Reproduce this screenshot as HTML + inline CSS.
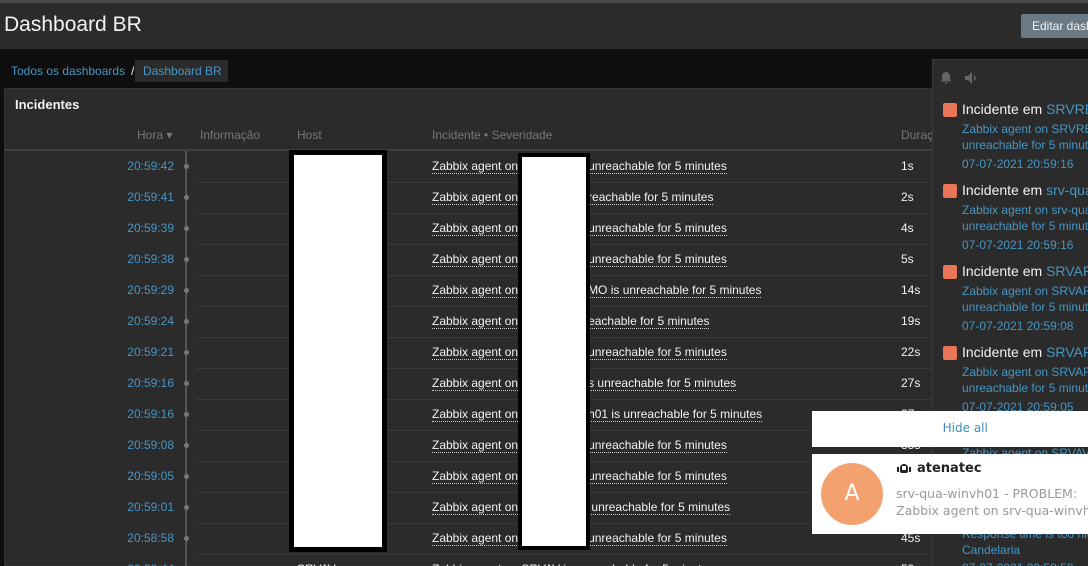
<!DOCTYPE html>
<html><head><meta charset="utf-8"><style>
*{margin:0;padding:0;box-sizing:border-box}
html,body{width:1088px;height:566px;overflow:hidden}
body{background:#0e0e0e;font-family:"Liberation Sans",Arial,sans-serif;position:relative;font-size:12px}
.a,.t,.inc,.d,.nt,.nl{position:absolute;white-space:nowrap}
.row{position:absolute;left:196px;width:740px;height:1px;background:#3a3a3a}
.t{left:100px;width:74px;text-align:right;color:#4796c4;font-size:12px}
.dot{position:absolute;left:184px;width:5px;height:5px;border-radius:50%;background:#777}
.inc{left:432px;color:#f2f2f2;border-bottom:1px dotted #ccc;line-height:14px}
.inc i{display:inline-block;width:70px}
.d{left:901px;color:#f2f2f2}
.sq{position:absolute;left:943px;width:14px;height:14px;background:#e97659;border-radius:2px}
.nt{left:962px;color:#f2f2f2;font-size:14px}
.nt span{color:#4796c4}
.nl{left:962px;color:#4796c4;font-size:12px}
</style></head><body>
<div class="a" style="left:0;top:0;width:1088px;height:3px;background:#4a4a4a"></div>
<div class="a" style="left:0;top:3px;width:1088px;height:46px;background:#2b2b2b"></div>
<div class="a" style="left:4px;top:13px;font-size:21px;color:#f2f2f2">Dashboard BR</div>
<div class="a" style="left:1021px;top:14px;width:80px;height:24px;background:#697a86;border-radius:2px;color:#f2f2f2;font-size:12px;padding:5px 0 0 11px">Editar dashboard</div>
<div class="a" style="left:11px;top:64px;color:#4796c4">Todos os dashboards</div>
<div class="a" style="left:131px;top:64px;color:#eee">/</div>
<div class="a" style="left:135px;top:60px;width:93px;height:22px;background:#2b2b2b;color:#4796c4;padding:4px 0 0 8px">Dashboard BR</div>
<div class="a" style="left:4px;top:88px;width:940px;height:478px;background:#2b2b2b;border:1px solid #333"></div>
<div class="a" style="left:15px;top:97px;color:#f2f2f2;font-size:13px;font-weight:bold">Incidentes</div>
<div class="a" style="left:137px;top:128px;color:#777">Hora ▾</div>
<div class="a" style="left:200px;top:128px;color:#777">Informação</div>
<div class="a" style="left:297px;top:128px;color:#777">Host</div>
<div class="a" style="left:432px;top:128px;color:#777">Incidente • Severidade</div>
<div class="a" style="left:901px;top:128px;color:#777">Duração</div>
<div class="a" style="left:5px;top:149px;width:930px;height:2px;background:#3f3f3f"></div>
<div class="a" style="left:185px;top:151px;width:2px;height:415px;background:#555"></div>

<div class="t" style="top:159px">20:59:42</div><div class="dot" style="top:164px"></div><div class="inc" style="top:159px">Zabbix agent on<i></i>unreachable for 5 minutes</div><div class="d" style="top:159px">1s</div><div class="row" style="top:182px"></div>
<div class="t" style="top:190px">20:59:41</div><div class="dot" style="top:195px"></div><div class="inc" style="top:190px">Zabbix agent on<i></i>reachable for 5 minutes</div><div class="d" style="top:190px">2s</div><div class="row" style="top:213px"></div>
<div class="t" style="top:221px">20:59:39</div><div class="dot" style="top:226px"></div><div class="inc" style="top:221px">Zabbix agent on<i></i>unreachable for 5 minutes</div><div class="d" style="top:221px">4s</div><div class="row" style="top:244px"></div>
<div class="t" style="top:252px">20:59:38</div><div class="dot" style="top:257px"></div><div class="inc" style="top:252px">Zabbix agent on<i></i>unreachable for 5 minutes</div><div class="d" style="top:252px">5s</div><div class="row" style="top:275px"></div>
<div class="t" style="top:283px">20:59:29</div><div class="dot" style="top:288px"></div><div class="inc" style="top:283px">Zabbix agent on<i></i>MO is unreachable for 5 minutes</div><div class="d" style="top:283px">14s</div><div class="row" style="top:306px"></div>
<div class="t" style="top:314px">20:59:24</div><div class="dot" style="top:319px"></div><div class="inc" style="top:314px">Zabbix agent on<i></i>eachable for 5 minutes</div><div class="d" style="top:314px">19s</div><div class="row" style="top:337px"></div>
<div class="t" style="top:345px">20:59:21</div><div class="dot" style="top:350px"></div><div class="inc" style="top:345px">Zabbix agent on<i></i>unreachable for 5 minutes</div><div class="d" style="top:345px">22s</div><div class="row" style="top:368px"></div>
<div class="t" style="top:376px">20:59:16</div><div class="dot" style="top:381px"></div><div class="inc" style="top:376px">Zabbix agent on<i></i>s unreachable for 5 minutes</div><div class="d" style="top:376px">27s</div><div class="row" style="top:399px"></div>
<div class="t" style="top:407px">20:59:16</div><div class="dot" style="top:412px"></div><div class="inc" style="top:407px">Zabbix agent on<i></i>h01 is unreachable for 5 minutes</div><div class="d" style="top:407px">27s</div><div class="row" style="top:430px"></div>
<div class="t" style="top:438px">20:59:08</div><div class="dot" style="top:443px"></div><div class="inc" style="top:438px">Zabbix agent on<i></i>unreachable for 5 minutes</div><div class="d" style="top:438px">35s</div><div class="row" style="top:461px"></div>
<div class="t" style="top:469px">20:59:05</div><div class="dot" style="top:474px"></div><div class="inc" style="top:469px">Zabbix agent on<i></i>unreachable for 5 minutes</div><div class="d" style="top:469px">38s</div><div class="row" style="top:492px"></div>
<div class="t" style="top:500px">20:59:01</div><div class="dot" style="top:505px"></div><div class="inc" style="top:500px">Zabbix agent on<i></i>&nbsp;unreachable for 5 minutes</div><div class="d" style="top:500px">42s</div><div class="row" style="top:523px"></div>
<div class="t" style="top:531px">20:58:58</div><div class="dot" style="top:536px"></div><div class="inc" style="top:531px">Zabbix agent on<i></i>unreachable for 5 minutes</div><div class="d" style="top:531px">45s</div><div class="row" style="top:554px"></div>
<div class="t" style="top:562px">20:58:44</div><div class="a" style="left:297px;top:562px;color:#f2f2f2">SRVAV</div><div class="inc" style="top:562px">Zabbix agent on SRVAV is unreachable for 5 minutes</div><div class="d" style="top:562px">59s</div>

<div class="a" style="left:289px;top:150px;width:98px;height:402px;background:#000"></div>
<div class="a" style="left:294px;top:155px;width:88px;height:392px;background:#fff"></div>
<div class="a" style="left:518px;top:153px;width:72px;height:397px;background:#000"></div>
<div class="a" style="left:522px;top:157px;width:64px;height:389px;background:#fff"></div>

<div class="a" style="left:932px;top:59px;width:160px;height:510px;background:#2b2b2b;border:1px solid #3a3a3a"></div>
<svg class="a" style="left:940px;top:71px" width="12" height="14" viewBox="0 0 12 14"><path d="M6 1c-2.5 0-4 2-4 4.5v3L1 10.5h10L10 8.5v-3C10 3 8.5 1 6 1z M4.5 11.5h3a1.5 1.5 0 0 1-3 0z" fill="#666"/></svg>
<svg class="a" style="left:964px;top:71px" width="16" height="14" viewBox="0 0 16 14"><path d="M1 5h3l4-4v12l-4-4H1z" fill="#666"/><path d="M10 4.5a3.5 3.5 0 0 1 0 5" stroke="#666" stroke-width="1.5" fill="none"/></svg>

<div class="sq" style="top:103px"></div><div class="nt" style="top:101px">Incidente em <span>SRVREDE</span></div>
<div class="nl" style="top:122px">Zabbix agent on SRVREDE is</div><div class="nl" style="top:138px">unreachable for 5 minutes</div><div class="nl" style="top:157px">07-07-2021 20:59:16</div>
<div class="sq" style="top:184px"></div><div class="nt" style="top:182px">Incidente em <span>srv-qua-winvh01</span></div>
<div class="nl" style="top:203px">Zabbix agent on srv-qua-winvh01 is</div><div class="nl" style="top:219px">unreachable for 5 minutes</div><div class="nl" style="top:238px">07-07-2021 20:59:16</div>
<div class="sq" style="top:265px"></div><div class="nt" style="top:263px">Incidente em <span>SRVARQ</span></div>
<div class="nl" style="top:284px">Zabbix agent on SRVARQ is</div><div class="nl" style="top:300px">unreachable for 5 minutes</div><div class="nl" style="top:319px">07-07-2021 20:59:08</div>
<div class="sq" style="top:346px"></div><div class="nt" style="top:344px">Incidente em <span>SRVARQ2</span></div>
<div class="nl" style="top:365px">Zabbix agent on SRVARQ2 is</div><div class="nl" style="top:381px">unreachable for 5 minutes</div><div class="nl" style="top:400px">07-07-2021 20:59:05</div>
<div class="nl" style="top:446px">Zabbix agent on SRVAV is</div>
<div class="nl" style="top:527px">Response time is too high</div><div class="nl" style="top:543px">Candelaria</div><div class="nl" style="top:561px">07-07-2021 20:58:58</div>

<div class="a" style="left:812px;top:411px;width:276px;height:36px;background:#fff;color:#3d8fb8;text-align:center;padding-top:10px;font-family:'DejaVu Sans',sans-serif;font-size:12px">&nbsp;&nbsp;&nbsp;&nbsp;&nbsp;&nbsp;&nbsp;&nbsp;Hide all</div>
<div class="a" style="left:812px;top:454px;width:276px;height:80px;background:#fff"></div>
<div class="a" style="left:821px;top:463px;width:62px;height:62px;border-radius:50%;background:#f4a170;color:#fff;font-family:'DejaVu Sans',sans-serif;font-size:22px;text-align:center;line-height:62px">A</div>
<svg class="a" style="left:897px;top:463px" width="14" height="12" viewBox="0 0 14 12"><rect x="0" y="4" width="2" height="5" fill="#222"/><rect x="12" y="4" width="2" height="5" fill="#222"/><path d="M3 8V5a4 4 0 0 1 8 0v3a2 2 0 0 1-2 2H5a2 2 0 0 1-2-2z" fill="#222"/><rect x="5" y="3" width="4" height="4" fill="#fff"/></svg>
<div class="a" style="left:917px;top:461px;font-family:'DejaVu Sans',sans-serif;font-size:13px;color:#222;font-weight:bold">atenatec</div>
<div class="a" style="left:896px;top:486px;font-family:'DejaVu Sans',sans-serif;font-size:12.5px;color:#999">srv-qua-winvh01 - PROBLEM:</div>
<div class="a" style="left:896px;top:503px;font-family:'DejaVu Sans',sans-serif;font-size:12.5px;color:#999">Zabbix agent on srv-qua-winvh01 is</div>
</body></html>
